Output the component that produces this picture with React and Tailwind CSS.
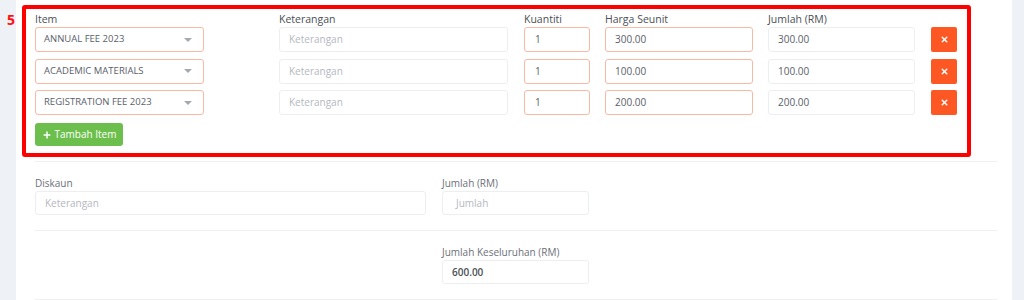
import { Plus, X } from 'lucide-react';

const items = [
  { name: 'ANNUAL FEE 2023', price: '300.00' },
  { name: 'ACADEMIC MATERIALS', price: '100.00' },
  { name: 'REGISTRATION FEE 2023', price: '200.00' },
];

const font = { fontFamily: '"Open Sans", "Noto Sans", sans-serif' };

function Caret() {
  return (
    <svg width="8" height="4" viewBox="0 0 8 4" className="shrink-0">
      <path d="M0 0h8L4 4z" fill="#a3a9b1" />
    </svg>
  );
}

function ItemRow({ item, first }) {
  return (
    <div className={`flex h-[25px] items-stretch ${first ? '' : 'mt-[6.5px]'}`}>
      <div className="flex w-[169px] items-center justify-between rounded-[3px] border border-[#f9b9a3] bg-white pl-[8px] pr-[11px] text-[9.5px] text-[#5a6069]">
        <span>{item.name}</span>
        <Caret />
      </div>
      <div className="ml-[75px] flex w-[229px] items-center rounded-[3px] border border-[#eceef1] pl-[9px] text-[10px] text-[#b3b8c0]">
        Keterangan
      </div>
      <div className="ml-[16px] flex w-[66px] items-center rounded-[3px] border border-[#f9b9a3] pl-[10px] text-[10px] text-[#5a6069]">
        1
      </div>
      <div className="ml-[15px] flex w-[148px] items-center rounded-[3px] border border-[#f9b9a3] pl-[9px] text-[10px] text-[#5a6069]">
        {item.price}
      </div>
      <div className="ml-[15px] flex w-[147px] items-center rounded-[3px] border border-[#eceef1] pl-[9px] text-[10px] text-[#5a6069]">
        {item.price}
      </div>
      <button
        type="button"
        className="ml-[16px] flex w-[26px] items-center justify-center rounded-[2px] bg-[#fd5724] text-white"
      >
        <X size={9} strokeWidth={4} />
      </button>
    </div>
  );
}

export default function App() {
  return (
    <div className="relative flex h-[300px] w-[1024px] overflow-hidden bg-[#eef2f6]" style={font}>
      <span className="absolute left-[7px] top-[9px] text-[14px] font-bold text-[#ff1010]">5</span>
      <div className="ml-[16px] w-[996px] bg-white pl-[19px] pr-[15px] pt-[5px]">
        {/* highlighted item table */}
        <div className="-ml-[13px] w-[949px] rounded-[3px] border-[4px] border-[#ff0000] pb-[7px] pl-[9px] pr-[10px] pt-[4px]">
          <div className="flex h-[14px] items-center text-[10.5px] font-medium text-[#4b4f56]">
            <span className="w-[169px]">Item</span>
            <span className="ml-[75px] w-[229px]">Keterangan</span>
            <span className="ml-[16px] w-[66px]">Kuantiti</span>
            <span className="ml-[15px] w-[148px]">Harga Seunit</span>
            <span className="ml-[15px] w-[147px]">Jumlah (RM)</span>
          </div>
          {items.map((item, i) => (
            <ItemRow key={item.name} item={item} first={i === 0} />
          ))}
          <button
            type="button"
            className="mt-[8px] flex h-[23px] w-[88px] items-center justify-center gap-[3px] rounded-[3px] bg-[#6cbf4c] text-[10px] font-medium text-white"
          >
            <Plus size={10} strokeWidth={3.5} />
            Tambah Item
          </button>
        </div>

        <div className="mt-[4px] border-t border-[#eef0f3]" />

        <div className="flex pt-[15px] pb-[15px]">
          <div className="w-[391px]">
            <div className="h-[13px] text-[10px] leading-[13px] text-[#6b7078]">Diskaun</div>
            <div className="mt-[1px] flex h-[24px] items-center rounded-[3px] border border-[#eceef1] pl-[9px] text-[10px] text-[#b3b8c0]">
              Keterangan
            </div>
          </div>
          <div className="ml-[16px] w-[147px]">
            <div className="h-[13px] text-[10px] leading-[13px] text-[#6b7078]">Jumlah (RM)</div>
            <div className="mt-[1px] flex h-[24px] items-center rounded-[3px] border border-[#eceef1] pl-[13px] text-[10px] text-[#b3b8c0]">
              Jumlah
            </div>
          </div>
        </div>

        <div className="border-t border-[#eef0f3]" />

        <div className="flex pt-[15px] pb-[15px]">
          <div className="ml-[407px] w-[147px]">
            <div className="h-[13px] text-[10px] leading-[13px] text-[#6b7078]">Jumlah Keseluruhan (RM)</div>
            <div className="mt-[1px] flex h-[24px] items-center rounded-[3px] border border-[#eceef1] pl-[9px] text-[10px] font-semibold text-[#4b4f56]">
              600.00
            </div>
          </div>
        </div>

        <div className="border-t border-[#eef0f3]" />
      </div>
    </div>
  );
}
